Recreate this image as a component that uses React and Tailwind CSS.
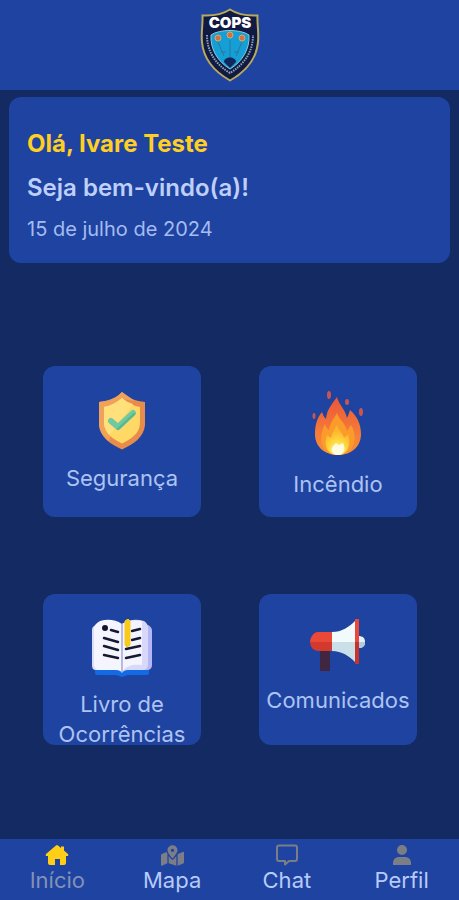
import React from "react";
import { FaMapMarkedAlt } from "react-icons/fa";

const Crest = () => (
  <svg width="60" height="74" viewBox="0 0 60 74" role="img" aria-label="COPS">
    <path
      d="M30 1.5C23 6 12 8 2.5 7.5C3 16 1 24 2 34C3.500 51 15 64 30 72.500C45 64 56.500 51 58 34C59 24 57 16 57.500 7.500C48 8 37 6 30 1.500Z"
      fill="#111a42"
      stroke="#b9a95c"
      strokeWidth="2"
    />
    <path d="M7 27C7 43 15 56 30 65C45 56 53 43 53 27" fill="none" stroke="#8fa6b8" strokeWidth="2" strokeDasharray="1.500 1" />
    <path d="M11 27C19 21 41 21 49 27C50 41 42 54 30 61C18 54 10 41 11 27Z" fill="#149fd6" stroke="#8ccbd6" strokeWidth="1" />
    <path d="M30 32V51M18 34L24 48M42 34L36 48M21 44H26M34 44H39" stroke="#2e7796" strokeWidth="1" fill="none" />
    <path d="M24 54C24 48 36 48 36 54L30 60Z" fill="#10265c" />
    <g fill="#cc7542" stroke="#e0a36c" strokeWidth="1">
      <circle cx="18" cy="30" r="3" />
      <circle cx="30" cy="27" r="3" />
      <circle cx="42" cy="30" r="3" />
    </g>
    <text x="30" y="20" textAnchor="middle" fill="#ffffff" fontFamily="Inter, sans-serif" fontWeight="900" fontSize="15">
      COPS
    </text>
  </svg>
);

const ShieldIcon = () => (
  <svg width="48" height="60" viewBox="0 0 48 60" aria-hidden="true">
    <path d="M24 1C17 8 10 10 1 11V34C2 46 12 53 24 58.500C36 53 46 46 47 34V11C38 10 31 8 24 1Z" fill="#e98b4b" />
    <path d="M24 1C17 8 10 10 1 11V34C2 42 6 46 11 50L24 8L37 10Z" fill="#f0a25a" />
    <path d="M24 7C18 12 12 15 6 16V33C7 43 15 48 24 52.500C33 48 41 43 42 33V16C36 15 30 12 24 7Z" fill="#ffd866" />
    <path d="M24 7C18 12 12 15 6 16V33C7 38 9 41 12 44L35 13C31 12 27 10 24 7Z" fill="#ffe07a" />
    <path d="M13 30L20 36L35 22" fill="none" stroke="#72c9a0" strokeWidth="6" strokeLinecap="round" strokeLinejoin="round" />
    <path d="M20 38L36 23" fill="none" stroke="#58b58e" strokeWidth="2" strokeLinecap="round" />
  </svg>
);

const FireIcon = () => (
  <svg width="54" height="66" viewBox="0 0 54 66" aria-hidden="true">
    <defs>
      <linearGradient id="flame" x1="0" y1="0" x2="0" y2="1">
        <stop offset="0" stopColor="#e95639" />
        <stop offset="0.600" stopColor="#f57a38" />
        <stop offset="1" stopColor="#f7903a" />
      </linearGradient>
      <radialGradient id="core" cx="0.500" cy="0.900" r="0.700">
        <stop offset="0" stopColor="#fff8bd" />
        <stop offset="0.500" stopColor="#ffdc3f" />
        <stop offset="1" stopColor="#fdb52c" />
      </radialGradient>
    </defs>
    <path
      d="M26 6C21 13 16 18 15 28C13 26 12 24 11 21C6 27 4 34 4 43C4 56 14 64 27 64C41 64 50 55 50 43C50 33 46 25 39 19C38 22 37 25 36 27C34 18 28 14 26 6Z"
      fill="url(#flame)"
    />
    <path d="M26 22C22 29 19 32 18 39C16 38 15 36 14 33C11 39 9 46 11 53C13 60 19 64 27 64C34 64 39 61 42 54C45 48 44 41 40 34L36 40C34 31 28 29 26 22Z" fill="#fb9b2b" />
    <path d="M26 34C23 39 21 42 20 47L16 44C12 55 17 64 27 64C36 64 41 54 37 43L33 47C31 40 27 39 26 34Z" fill="url(#core)" />
    <path d="M22 55L25 52L28 54L32 52C35 58 33 63 28 64C21 64 19 59 22 55Z" fill="#fffbdf" />
    <g fill="#c95550">
      <ellipse cx="18" cy="4" rx="2" ry="4" />
      <ellipse cx="36" cy="11" rx="2" ry="3" />
      <ellipse cx="50" cy="21" rx="2" ry="4" />
      <ellipse cx="3" cy="25" rx="1.500" ry="3" />
    </g>
  </svg>
);

const BookIcon = () => (
  <svg width="62" height="58" viewBox="0 0 62 58" aria-hidden="true">
    <path d="M4 44H58V54Q58 56 55 56H37L31 58L25 56H7Q4 56 4 54Z" fill="#126be2" />
    <path d="M1 11C1 7 5 6 8 5V51H5C2 51 1 49 1 46Z" fill="#dcddfa" />
    <path d="M54 5C58 6 61 8 61 12V46C61 49 59 51 56 51H53Z" fill="#b5b7f4" />
    <path d="M31 5C24 0 16 0 9 2C6 4 3 6 3 9V45C3 49 5 51 8 51H25C28 51 30 52 31 54Z" fill="#f5f5ff" />
    <path d="M31 5C38 0 46 0 53 2C56 4 57 6 57 9V45C57 49 55 51 52 51H37C34 51 32 52 31 54Z" fill="#d8d8fa" />
    <path d="M31 5C37 1 44 1 51 2V46C43 45 36 46 31 53Z" fill="#f4f4ff" />
    <path d="M31 5V53" stroke="#b8b9e5" strokeWidth="2" />
    <circle cx="14" cy="9" r="3" fill="#11142c" />
    <path d="M20 11L27 13M13 19L27 23M13 27L27 31M13 36L27 39" stroke="#151932" strokeWidth="2.500" strokeLinecap="round" />
    <path d="M41 12L49 10M41 21L49 19M35 30L49 27M35 39L49 36" stroke="#151932" strokeWidth="2.500" strokeLinecap="round" />
    <path d="M34 2L37 0L39 2V26L36 28L34 26Z" fill="#f9cb18" stroke="#f9cb18" strokeWidth="1" />
  </svg>
);

const MegaphoneIcon = () => (
  <svg width="56" height="54" viewBox="0 0 56 54" aria-hidden="true">
    <path d="M10 31H20V52H10Z" fill="#402641" />
    <path d="M48 17C53 17 55 19 55 23C55 27 53 29 48 29Z" fill="#e4f1f7" />
    <path d="M48 23H55C55 27 53 29 48 29Z" fill="#adcddd" />
    <path d="M22 13H8C4 13 0 18 0 23H22Z" fill="#eb4938" />
    <path d="M0 23C0 28 4 32 8 32H22V23Z" fill="#d23a30" />
    <path d="M22 13C32 13 39 8 45 2V23H22Z" fill="#f3fafb" />
    <path d="M22 23H45V43C39 37 32 32 22 32Z" fill="#c9e0e8" />
    <path d="M45 0H49V23H45Z" fill="#eb4938" />
    <path d="M45 23H49V45H45Z" fill="#c7322c" />
  </svg>
);

const HomeIcon = () => (
  <svg width="24" height="22" viewBox="0 0 24 22" fill="#ffcf17" aria-hidden="true">
    <path d="M11 1.400Q12 .6 13 1.400L16 4V2.500H19V6.500L23 10Q24 12 22 12H21V19Q21 21 19 21H15V15H10V21H5Q3 21 3 19V12H2Q0 12 1 10Z" />
  </svg>
);

const ChatIcon = () => (
  <svg width="22" height="22" viewBox="0 0 22 22" fill="none" stroke="#7b7e86" strokeWidth="2" strokeLinejoin="round" aria-hidden="true">
    <path d="M3 1.500H19Q21 1.500 21 3.500V15Q21 17 19 17H13L9 20.500V17H3Q1 17 1 15V3.500Q1 1.500 3 1.500Z" />
  </svg>
);

const PersonIcon = () => (
  <svg width="20" height="22" viewBox="0 0 20 22" fill="#7b7e86" aria-hidden="true">
    <circle cx="10" cy="6" r="5" />
    <path d="M1 21V19C1 15 4 13 7 13H13C16 13 19 15 19 19V21Z" />
  </svg>
);

const tiles = [
  { label: "Segurança", icon: <ShieldIcon /> },
  { label: "Incêndio", icon: <FireIcon /> },
  { label: "Livro de Ocorrências", icon: <BookIcon /> },
  { label: "Comunicados", icon: <MegaphoneIcon /> },
];

const tabs = [
  { label: "Início", icon: <HomeIcon />, active: true },
  { label: "Mapa", icon: <FaMapMarkedAlt size={23} color="#7b7e86" /> },
  { label: "Chat", icon: <ChatIcon /> },
  { label: "Perfil", icon: <PersonIcon /> },
];

const Tile = ({ label, icon }) => (
  <button
    type="button"
    className="flex h-[151px] flex-col items-center gap-3 rounded-xl bg-[#1f43a0] pt-[25px] text-[22px] leading-[30px] text-[#adc3f4]"
  >
    <span className="shrink-0">{icon}</span>
    <span>{label}</span>
  </button>
);

const App = () => {
  return (
    <div className="flex min-h-screen flex-col bg-[#132a62] font-['Inter',sans-serif]">
      <header className="flex h-[90px] items-center justify-center bg-[#1f43a0]">
        <Crest />
      </header>

      <main className="flex-1 px-[9px] pt-[7px]">
        <section className="rounded-xl bg-[#1f43a0] px-[18px] pt-[29px] pb-[19px]">
          <h1 className="text-2xl leading-[36px] font-bold text-[#ffcf24]">Olá, Ivare Teste</h1>
          <h2 className="mt-2 text-2xl leading-[36px] font-semibold text-[#bed0fa]">Seja bem-vindo(a)!</h2>
          <p className="mt-2 text-xl leading-[30px] text-[#a4bcf2]">15 de julho de 2024</p>
        </section>

        <div className="mt-[103px] mb-8 grid grid-cols-2 gap-x-[58px] gap-y-[77px] pr-[33px] pl-[34px]">
          {tiles.map((tile) => (
            <Tile key={tile.label} label={tile.label} icon={tile.icon} />
          ))}
        </div>
      </main>

      <nav className="grid h-[61px] grid-cols-4 bg-[#1f43a0]">
        {tabs.map((tab) => (
          <a key={tab.label} href="#" className="flex flex-col items-center pt-1">
            <span className="flex h-6 items-center">{tab.icon}</span>
            <span
              className={
                tab.active
                  ? "text-[22px] leading-[26px] text-[#8291b8]"
                  : "text-[22px] leading-[26px] text-[#b7cbfa]"
              }
            >
              {tab.label}
            </span>
          </a>
        ))}
      </nav>
    </div>
  );
};

export default App;
